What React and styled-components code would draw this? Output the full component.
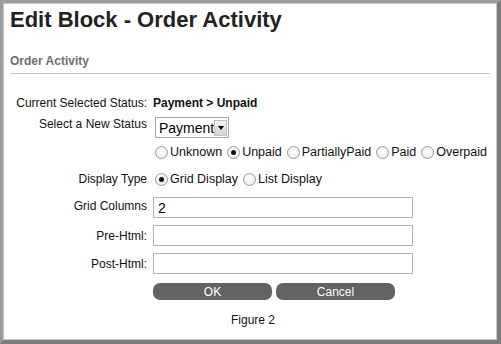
import React from 'react'
import styled, { createGlobalStyle } from 'styled-components'

const GlobalStyle = createGlobalStyle`
    html, body {
        margin: 0;
        padding: 0;
        background: #ffffff;
    }
    body {
        font-family: "Liberation Sans", Arial, sans-serif;
    }
`

const Frame = styled.div`
    box-sizing: border-box;
    width: 501px;
    height: 344px;
    border-left: 3px solid #9c9c9c;
    border-top: 3px solid #9c9c9c;
    border-right: 4px solid #7d7d7d;
    border-bottom: 4px solid #7d7d7d;
    box-shadow: inset -1px -1px 0 #c8c8c8, inset 1px 1px 0 #c4c4c4;
    padding: 4px 7px 0 7px;
    display: flex;
    flex-direction: column;
    overflow: hidden;
`

const Title = styled.h1`
    margin: 0;
    font-size: 22px;
    font-weight: bold;
    color: #222;
    line-height: 26px;
`

const Section = styled.div`
    margin-top: 21px;
    padding-bottom: 5px;
    border-bottom: 1px solid #c9c9c9;
    font-size: 12px;
    font-weight: bold;
    color: #6a6e78;
`

const Form = styled.div`
    display: grid;
    grid-template-columns: 137px 1fr;
    column-gap: 6px;
    margin-top: 22px;
    font-size: 12px;
    color: #111;
`

const Label = styled.div`
    text-align: right;
    padding-top: ${p => p.$top || 0}px;
    white-space: nowrap;
`

const Cell = styled.div`
    display: flex;
    flex-direction: column;
    gap: ${p => p.$gap || 0}px;
    margin-bottom: ${p => p.$mb || 0}px;
`

const Value = styled.div`
    font-weight: bold;
`

const SelectBox = styled.div`
    display: flex;
    align-items: center;
    width: 74px;
    height: 21px;
    box-sizing: border-box;
    border: 1px solid #a6a6a6;
    margin-left: 2px;
    padding-left: 3px;
    font-size: 14px;
    color: #000;
    justify-content: space-between;
`

const Arrow = styled.div`
    width: 15px;
    height: 16px;
    margin-right: 1px;
    background: linear-gradient(#f2f2f2, #d4d4d4);
    border: 1px solid #c0c0c0;
    box-sizing: border-box;
    display: flex;
    align-items: center;
    justify-content: center;
    &::after {
        content: '';
        border-left: 3.5px solid transparent;
        border-right: 3.5px solid transparent;
        border-top: 4px solid #000;
    }
`

const RadioRow = styled.div`
    display: flex;
    align-items: center;
    gap: 5px;
    font-size: 12.5px;
    margin-left: 2px;
`

const RadioItem = styled.label`
    display: flex;
    align-items: center;
    gap: 2px;
    color: #111;
`

const Dot = styled.span`
    width: 13px;
    height: 13px;
    box-sizing: border-box;
    border-radius: 50%;
    border: 1px solid #9a9a9a;
    background: radial-gradient(circle at 50% 40%, #ffffff, #e6e6e6);
    display: flex;
    align-items: center;
    justify-content: center;
    &::after {
        content: '';
        width: 5px;
        height: 5px;
        border-radius: 50%;
        background: ${p => (p.$on ? '#111' : 'transparent')};
    }
`

const TextInput = styled.div`
    width: 260px;
    height: 21px;
    box-sizing: border-box;
    border: 1px solid #b4b4b4;
    padding: 2px 4px;
    font-size: 14px;
    color: #000;
`

const Buttons = styled.div`
    display: flex;
    gap: 4px;
`

const Button = styled.div`
    width: 119px;
    height: 17px;
    border-radius: 7px;
    background: #636363;
    color: #ffffff;
    font-size: 12px;
    display: flex;
    align-items: center;
    justify-content: center;
`

const Caption = styled.div`
    text-align: center;
    font-size: 12px;
    color: #111;
    margin-top: 13px;
    padding-left: 6px;
`

const Radio = ({ on, children }) => (
    <RadioItem>
        <Dot $on={on} />
        {children}
    </RadioItem>
)

const App = () => (
    <>
        <GlobalStyle />
        <Frame>
            <Title>Edit Block - Order Activity</Title>
            <Section>Order Activity</Section>
            <Form>
                <Label>Current Selected Status:</Label>
                <Cell $mb={7}>
                    <Value>Payment &gt; Unpaid</Value>
                </Cell>

                <Label>Select a New Status</Label>
                <Cell $gap={7} $mb={13}>
                    <SelectBox>
                        Payment
                        <Arrow />
                    </SelectBox>
                    <RadioRow>
                        <Radio>Unknown</Radio>
                        <Radio on>Unpaid</Radio>
                        <Radio>PartiallyPaid</Radio>
                        <Radio>Paid</Radio>
                        <Radio>Overpaid</Radio>
                    </RadioRow>
                </Cell>

                <Label>Display Type</Label>
                <Cell $mb={11}>
                    <RadioRow>
                        <Radio on>Grid Display</Radio>
                        <Radio>List Display</Radio>
                    </RadioRow>
                </Cell>

                <Label $top={2}>Grid Columns</Label>
                <Cell $mb={7}>
                    <TextInput>2</TextInput>
                </Cell>

                <Label $top={4}>Pre-Html:</Label>
                <Cell $mb={7}>
                    <TextInput />
                </Cell>

                <Label $top={4}>Post-Html:</Label>
                <Cell $mb={9}>
                    <TextInput />
                </Cell>

                <div />
                <Buttons>
                    <Button>OK</Button>
                    <Button>Cancel</Button>
                </Buttons>
            </Form>
            <Caption>Figure 2</Caption>
        </Frame>
    </>
)

export default App
